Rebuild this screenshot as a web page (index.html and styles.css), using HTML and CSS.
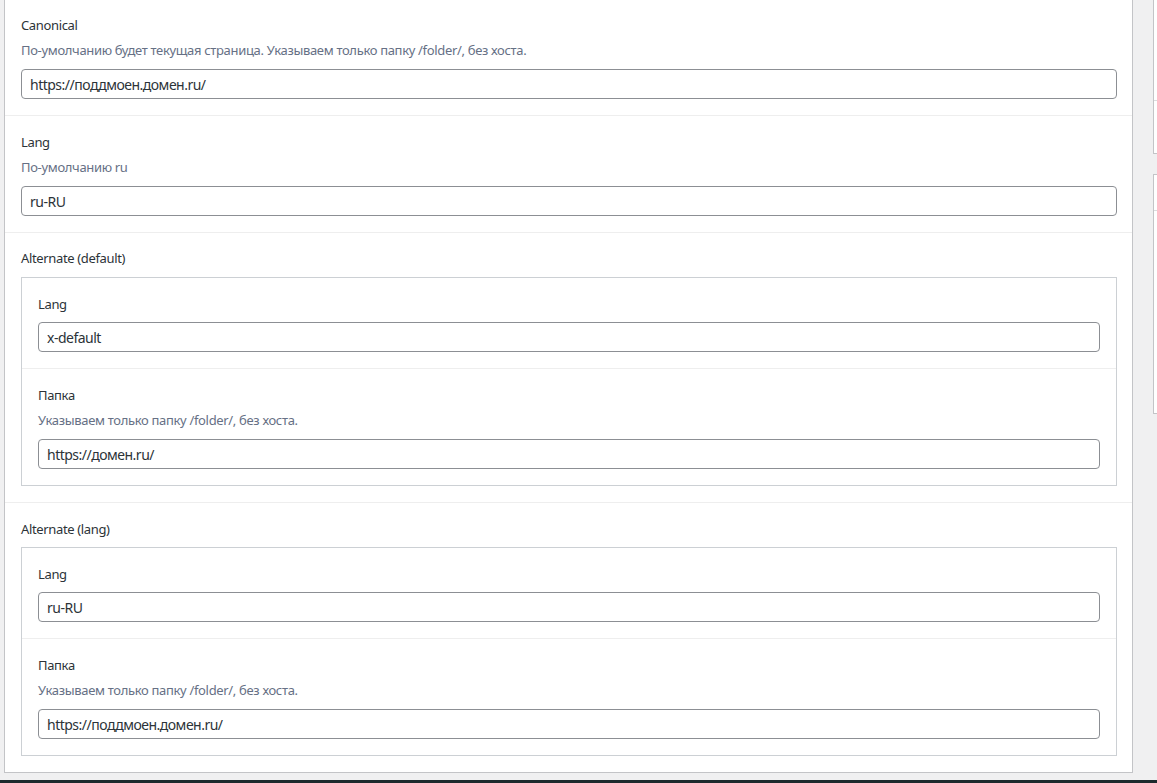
FILE: index.html
```html
<!DOCTYPE html>
<html lang="ru">
<head>
<meta charset="utf-8">
<title>Fields</title>
<link rel="stylesheet" href="styles.css">
</head>
<body>
<div class="page">
  <div class="layout">
    <div class="panel">
      <div class="field field-first">
        <div class="label">Canonical</div>
        <div class="desc">По-умолчанию будет текущая страница. Указываем только папку /folder/, без хоста.</div>
        <input class="input" type="text" value="https://поддмоен.домен.ru/">
      </div>
      <div class="field field-second">
        <div class="label">Lang</div>
        <div class="desc">По-умолчанию ru</div>
        <input class="input" type="text" value="ru-RU">
      </div>
      <div class="field">
        <div class="label label-group">Alternate (default)</div>
        <div class="group">
          <div class="field sub">
            <div class="label label-plain">Lang</div>
            <input class="input" type="text" value="x-default">
          </div>
          <div class="field sub">
            <div class="label">Папка</div>
            <div class="desc">Указываем только папку /folder/, без хоста.</div>
            <input class="input" type="text" value="https://домен.ru/">
          </div>
        </div>
      </div>
      <div class="field field-alt">
        <div class="label label-group">Alternate (lang)</div>
        <div class="group">
          <div class="field sub">
            <div class="label label-plain">Lang</div>
            <input class="input" type="text" value="ru-RU">
          </div>
          <div class="field sub">
            <div class="label">Папка</div>
            <div class="desc">Указываем только папку /folder/, без хоста.</div>
            <input class="input" type="text" value="https://поддмоен.домен.ru/">
          </div>
        </div>
      </div>
    </div>
    <div class="sidebar">
      <div class="box box-top">
        <div class="box-head-top"></div>
        <div class="box-body-top"></div>
      </div>
      <div class="box box-second">
        <div class="box-head"></div>
        <div class="box-body"></div>
      </div>
    </div>
  </div>
  <div class="footer-bar"></div>
</div>
</body>
</html>
```

FILE: styles.css
```css
html, body {
  margin: 0;
  padding: 0;
}
body {
  background: #f0f0f1;
  font-family: "Noto Sans", "Open Sans", sans-serif;
  color: #1d2327;
  overflow: hidden;
}
.page {
  display: flex;
  flex-direction: column;
  width: 1157px;
}
.layout {
  display: flex;
  align-items: flex-start;
  padding-left: 4px;
}
.panel {
  width: 1127px;
  flex: none;
  background: #fff;
  border: 1px solid #c3c4c7;
  border-top: none;
}
.field {
  padding: 16px 15px 16px 16px;
  border-top: 1px solid #eeeeee;
}
.field-first {
  border-top: none;
}
.field-second {
  padding-top: 17px;
}
.label {
  font-size: 13px;
  font-weight: 400;
  line-height: 18px;
  letter-spacing: -0.35px;
  color: #2c3338;
  margin-bottom: 7px;
}
.label-group {
  margin-bottom: 10px;
}
.field-alt .label-group {
  margin-top: 1px;
  margin-bottom: 9px;
}
.label-plain {
  margin-bottom: 9px;
}
.desc {
  font-size: 13px;
  line-height: 18px;
  letter-spacing: -0.33px;
  color: #667085;
  margin-bottom: 10px;
}
.input {
  display: block;
  width: 100%;
  height: 30px;
  box-sizing: border-box;
  border: 1px solid #8c8f94;
  border-radius: 4px;
  padding: 0 8px;
  margin: 0;
  font-family: "Noto Sans", "Open Sans", sans-serif;
  font-size: 14px;
  letter-spacing: -0.5px;
  color: #2c3338;
  background: #fff;
  outline: none;
}
.group {
  border: 1px solid #ccd0d4;
}
.group .field {
  padding: 17px 16px 16px 16px;
}
.group .field:first-child {
  border-top: none;
}
.sidebar {
  margin-left: 20px;
  flex: 1;
  min-width: 0;
}
.box {
  background: #fff;
  border: 1px solid #c3c4c7;
  border-right: none;
}
.box-top {
  border-top: none;
}
.box-second {
  margin-top: 20px;
}
.box-head-top {
  height: 100px;
}
.box-body-top {
  height: 52px;
  border-top: 1px solid #dcdcde;
}
.box-head {
  height: 35px;
}
.box-body {
  height: 202px;
  border-top: 1px solid #dcdcde;
}
.footer-bar {
  margin-top: 7px;
  height: 20px;
  background: #1d2a2d;
}
```
